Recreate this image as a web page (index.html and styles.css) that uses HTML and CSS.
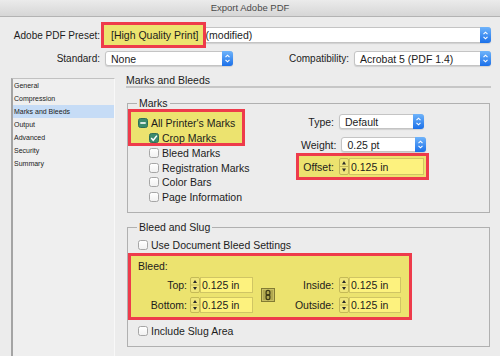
FILE: index.html
```html
<!DOCTYPE html>
<html>
<head>
<meta charset="utf-8">
<title>Export Adobe PDF</title>
<link rel="stylesheet" href="styles.css">
</head>
<body>
<div class="titlebar">Export Adobe PDF</div>

<div class="row row-preset">
  <span class="lbl-top">Adobe PDF Preset:</span>
  <div class="select select-preset">
    <span class="hl hl-preset">[High Quality Print]</span><span class="mod">(modified)</span>
    <span class="arrow"><svg width="7" height="11" viewBox="0 0 7 11"><path d="M1.5 4.2 L3.5 2.2 L5.5 4.2 M1.5 6.8 L3.5 8.8 L5.5 6.8" fill="none" stroke="#fff" stroke-width="1.1"/></svg></span>
  </div>
</div>

<div class="row row-standard">
  <span class="lbl-top">Standard:</span>
  <div class="select select-std">None<span class="arrow"><svg width="7" height="11" viewBox="0 0 7 11"><path d="M1.5 4.2 L3.5 2.2 L5.5 4.2 M1.5 6.8 L3.5 8.8 L5.5 6.8" fill="none" stroke="#fff" stroke-width="1.1"/></svg></span></div>
  <span class="lbl-compat">Compatibility:</span>
  <div class="select select-compat">Acrobat 5 (PDF 1.4)<span class="arrow"><svg width="7" height="11" viewBox="0 0 7 11"><path d="M1.5 4.2 L3.5 2.2 L5.5 4.2 M1.5 6.8 L3.5 8.8 L5.5 6.8" fill="none" stroke="#fff" stroke-width="1.1"/></svg></span></div>
</div>

<div class="body-area">
  <ul class="sidebar">
    <li>General</li>
    <li>Compression</li>
    <li class="sel">Marks and Bleeds</li>
    <li>Output</li>
    <li>Advanced</li>
    <li>Security</li>
    <li>Summary</li>
  </ul>

  <div class="panel">
    <div class="panel-title">Marks and Bleeds</div>

    <fieldset class="group group-marks">
      <legend>Marks</legend>
      <div class="marks-body">
        <div class="marks-left">
          <div class="hl hl-marks">
            <div class="check-row"><span class="cb cb-on"><svg width="10" height="10" viewBox="0 0 10 10"><rect x="2.3" y="4.2" width="5.4" height="1.6" fill="#fff"/></svg></span>All Printer's Marks</div>
            <div class="check-row indent"><span class="cb cb-on"><svg width="10" height="10" viewBox="0 0 10 10"><path d="M2.2 5.1 L4.2 7.3 L7.9 2.6" fill="none" stroke="#fff" stroke-width="1.5"/></svg></span>Crop Marks</div>
          </div>
          <div class="check-row sub"><span class="cb"></span>Bleed Marks</div>
          <div class="check-row sub"><span class="cb"></span>Registration Marks</div>
          <div class="check-row sub"><span class="cb"></span>Color Bars</div>
          <div class="check-row sub"><span class="cb"></span>Page Information</div>
        </div>

        <div class="marks-right">
          <div class="field-row row-type">
            <span class="flabel">Type:</span>
            <div class="select select-small">Default<span class="arrow"><svg width="7" height="11" viewBox="0 0 7 11"><path d="M1.5 4.2 L3.5 2.2 L5.5 4.2 M1.5 6.8 L3.5 8.8 L5.5 6.8" fill="none" stroke="#fff" stroke-width="1.1"/></svg></span></div>
          </div>
          <div class="field-row row-weight">
            <span class="flabel">Weight:</span>
            <div class="select select-small">0.25 pt<span class="arrow"><svg width="7" height="11" viewBox="0 0 7 11"><path d="M1.5 4.2 L3.5 2.2 L5.5 4.2 M1.5 6.8 L3.5 8.8 L5.5 6.8" fill="none" stroke="#fff" stroke-width="1.1"/></svg></span></div>
          </div>
          <div class="field-row hl hl-offset">
            <span class="flabel">Offset:</span>
            <div class="spin spin-offset">
              <svg class="stepper" viewBox="0 0 10 17" preserveAspectRatio="none"><rect x="0.5" y="0.5" width="9" height="16" rx="1.5" fill="#efe57a" stroke="#c2b757"/><line x1="1" y1="8.5" x2="9" y2="8.5" stroke="#c2b757"/><path d="M3 6.5 L5 3.3 L7 6.5Z M3 10.5 L5 13.7 L7 10.5Z" fill="#2a2a2a"/></svg>
              <span class="field">0.125 in</span>
            </div>
          </div>
        </div>
      </div>
    </fieldset>

    <fieldset class="group group-bleed">
      <legend>Bleed and Slug</legend>
      <div class="check-row doc-row"><span class="cb"></span>Use Document Bleed Settings</div>
      <div class="hl hl-bleed">
        <div class="bleed-title">Bleed:</div>
        <div class="bleed-grid">
          <span class="blabel">Top:</span>
          <div class="spin spin-bleed">
            <svg class="stepper" viewBox="0 0 10 17" preserveAspectRatio="none"><rect x="0.5" y="0.5" width="9" height="16" rx="1.5" fill="#efe57a" stroke="#c2b757"/><line x1="1" y1="8.5" x2="9" y2="8.5" stroke="#c2b757"/><path d="M3 6.5 L5 3.3 L7 6.5Z M3 10.5 L5 13.7 L7 10.5Z" fill="#2a2a2a"/></svg>
            <span class="field">0.125 in</span>
          </div>
          <span class="link"><svg width="14" height="14" viewBox="0 0 14 14"><rect x="0.5" y="0.5" width="13" height="13" fill="#b1a84f" stroke="#837b33"/><rect x="1.5" y="1.5" width="11" height="11" fill="none" stroke="#cfc66a" stroke-width="0.8"/><rect x="5.1" y="2.4" width="3.8" height="5" rx="1.9" fill="none" stroke="#3e3a15" stroke-width="1.2"/><rect x="5.1" y="6.6" width="3.8" height="5" rx="1.9" fill="none" stroke="#3e3a15" stroke-width="1.2"/></svg></span>
          <span class="blabel blabel-r">Inside:</span>
          <div class="spin">
            <svg class="stepper" viewBox="0 0 10 17" preserveAspectRatio="none"><rect x="0.5" y="0.5" width="9" height="16" rx="1.5" fill="#efe57a" stroke="#c2b757"/><line x1="1" y1="8.5" x2="9" y2="8.5" stroke="#c2b757"/><path d="M3 6.5 L5 3.3 L7 6.5Z M3 10.5 L5 13.7 L7 10.5Z" fill="#2a2a2a"/></svg>
            <span class="field">0.125 in</span>
          </div>
          <span class="blabel">Bottom:</span>
          <div class="spin spin-bleed">
            <svg class="stepper" viewBox="0 0 10 17" preserveAspectRatio="none"><rect x="0.5" y="0.5" width="9" height="16" rx="1.5" fill="#efe57a" stroke="#c2b757"/><line x1="1" y1="8.5" x2="9" y2="8.5" stroke="#c2b757"/><path d="M3 6.5 L5 3.3 L7 6.5Z M3 10.5 L5 13.7 L7 10.5Z" fill="#2a2a2a"/></svg>
            <span class="field">0.125 in</span>
          </div>
          <span class="blabel blabel-r">Outside:</span>
          <div class="spin">
            <svg class="stepper" viewBox="0 0 10 17" preserveAspectRatio="none"><rect x="0.5" y="0.5" width="9" height="16" rx="1.5" fill="#efe57a" stroke="#c2b757"/><line x1="1" y1="8.5" x2="9" y2="8.5" stroke="#c2b757"/><path d="M3 6.5 L5 3.3 L7 6.5Z M3 10.5 L5 13.7 L7 10.5Z" fill="#2a2a2a"/></svg>
            <span class="field">0.125 in</span>
          </div>
        </div>
      </div>
      <div class="check-row slug-row"><span class="cb"></span>Include Slug Area</div>
    </fieldset>
  </div>
</div>
</body>
</html>
```

FILE: styles.css
```css
* { box-sizing: border-box; }

html, body { margin: 0; padding: 0; }

body {
  width: 500px;
  height: 356px;
  overflow: hidden;
  background: #ececec;
  font-family: "Liberation Sans", Arial, sans-serif;
  font-size: 10.5px;
  color: #1c1c1c;
}

.titlebar {
  height: 17px;
  line-height: 16px;
  text-align: center;
  font-size: 9.5px;
  color: #4a4a4a;
  background: linear-gradient(#ebebeb, #d6d6d6);
  border-bottom: 1px solid #b3b3b3;
}

.row { display: flex; align-items: center; }
.row-preset { margin-top: 10px; height: 16px; padding-right: 9px; }
.row-standard { margin-top: 8px; height: 15px; }

.lbl-top {
  width: 100px;
  flex-shrink: 0;
  text-align: right;
  font-size: 10px;
}
.lbl-compat {
  width: 116px;
  flex-shrink: 0;
  text-align: right;
  font-size: 10px;
}

.select {
  display: flex;
  align-items: center;
  height: 100%;
  background: #fff;
  border: 1px solid #c4c4c4;
  border-radius: 3px;
  box-shadow: 0 1px 1px rgba(0, 0, 0, 0.12);
  padding-left: 5px;
  white-space: nowrap;
}
.arrow {
  display: flex;
  align-items: center;
  justify-content: center;
  width: 11px;
  align-self: stretch;
  margin: -1px -1px -1px auto;
  background: linear-gradient(#6fb4fb, #1b70e9);
  border-radius: 0 3px 3px 0;
  flex-shrink: 0;
}

.select-preset { flex: 1; margin-left: 4px; padding-left: 0; }
.select-std { width: 128px; margin-left: 5px; flex-shrink: 0; }
.select-compat { width: 137px; margin-left: 5px; flex-shrink: 0; }

.hl {
  background: #ece36f;
  border: 3px solid #ee3b4b;
}
.hl-preset {
  display: flex;
  align-items: center;
  height: 26px;
  margin-left: -4px;
  padding: 0 4px 0 7px;
  flex-shrink: 0;
}
.mod { margin-left: 0; }

.body-area {
  display: flex;
  align-items: flex-start;
  margin-top: 12px;
}

.sidebar {
  list-style: none;
  margin: 0 0 0 11px;
  padding: 0;
  width: 104px;
  height: 279px;
  flex-shrink: 0;
  background: #efefef;
  border: 1px solid #c1c1c1;
  border-left: 2px solid #a4a4a4;
  border-right-color: #f8f8f8;
  border-bottom: 0;
  font-size: 7px;
  color: #222;
}
.sidebar li {
  height: 13px;
  line-height: 13px;
  padding-left: 1px;
}
.sidebar li.sel { background: #c6dcf6; }

.panel {
  margin-left: 11px;
  margin-top: -3px;
  width: 365px;
}
.panel-title {
  line-height: 11px;
  height: 13px;
  border-bottom: 2px solid #c6c6c6;
}

.group {
  margin: 9px 0 0 1px;
  padding: 0;
  width: 363px;
  min-width: 0;
  border: 1px solid #b0b0b0;
}
.group legend {
  margin-left: 9px;
  padding: 0 2px;
  line-height: 12px;
}
.group-bleed { margin-top: 8px; padding-bottom: 8px; }

.marks-body {
  display: flex;
  justify-content: space-between;
  height: 103px;
}
.marks-left { width: 117px; }
.hl-marks {
  height: 37px;
  padding: 3px 0 0 7px;
}
.hl-marks .check-row { height: 15px; }

.check-row {
  display: flex;
  align-items: center;
  height: 14.5px;
  white-space: nowrap;
}
.indent { margin-left: 11px; }
.sub { padding-left: 21px; }

.cb {
  display: flex;
  width: 10px;
  height: 10px;
  margin-right: 3px;
  flex-shrink: 0;
  border: 1px solid #a6a6a6;
  border-radius: 2.5px;
  background: linear-gradient(#ffffff, #f1f1f1);
}
.cb svg { margin: -1px; }
.cb-on {
  background: #3b8b6d;
  border-color: #2f6f57;
}

.marks-right {
  width: 133px;
  margin-right: 60px;
  padding-top: 5px;
}
.field-row {
  display: grid;
  grid-template-columns: 1fr 85px;
  column-gap: 5px;
  align-items: center;
  padding: 0 5px;
}
.flabel { text-align: right; }
.row-type .select, .row-weight .select { height: 15px; }
.row-weight { margin-top: 8px; }
.hl-offset { margin-top: 1px; padding: 2px; }

.spin { display: flex; height: 17px; }
.bleed-grid .spin { height: 16px; }
.spin-bleed { margin-left: 3px; }
.stepper { width: 10px; height: 100%; flex-shrink: 0; }
.field {
  flex: 1;
  display: flex;
  align-items: center;
  padding-left: 1px;
  background: #fdf27e;
  border: 1px solid #d0c564;
  white-space: nowrap;
}

.doc-row { margin-top: 5px; height: 14px; padding-left: 10px; }
.slug-row { margin-top: 4px; height: 14px; padding-left: 10px; }

.hl-bleed {
  margin-top: 1px;
  width: 284px;
  height: 67px;
  padding: 3px 8px 4px 7px;
}
.bleed-title { line-height: 14px; }
.bleed-grid {
  display: grid;
  grid-template-columns: 49px 66px 22px 64px 62px;
  grid-template-rows: 16px 16px;
  row-gap: 4px;
  margin-top: 4px;
  align-items: center;
}
.blabel { text-align: right; }
.blabel-r { padding-right: 5px; }
.link {
  grid-column: 3;
  grid-row: 1 / span 2;
  display: flex;
  margin-left: 8px;
  width: 14px;
  height: 14px;
}
```
